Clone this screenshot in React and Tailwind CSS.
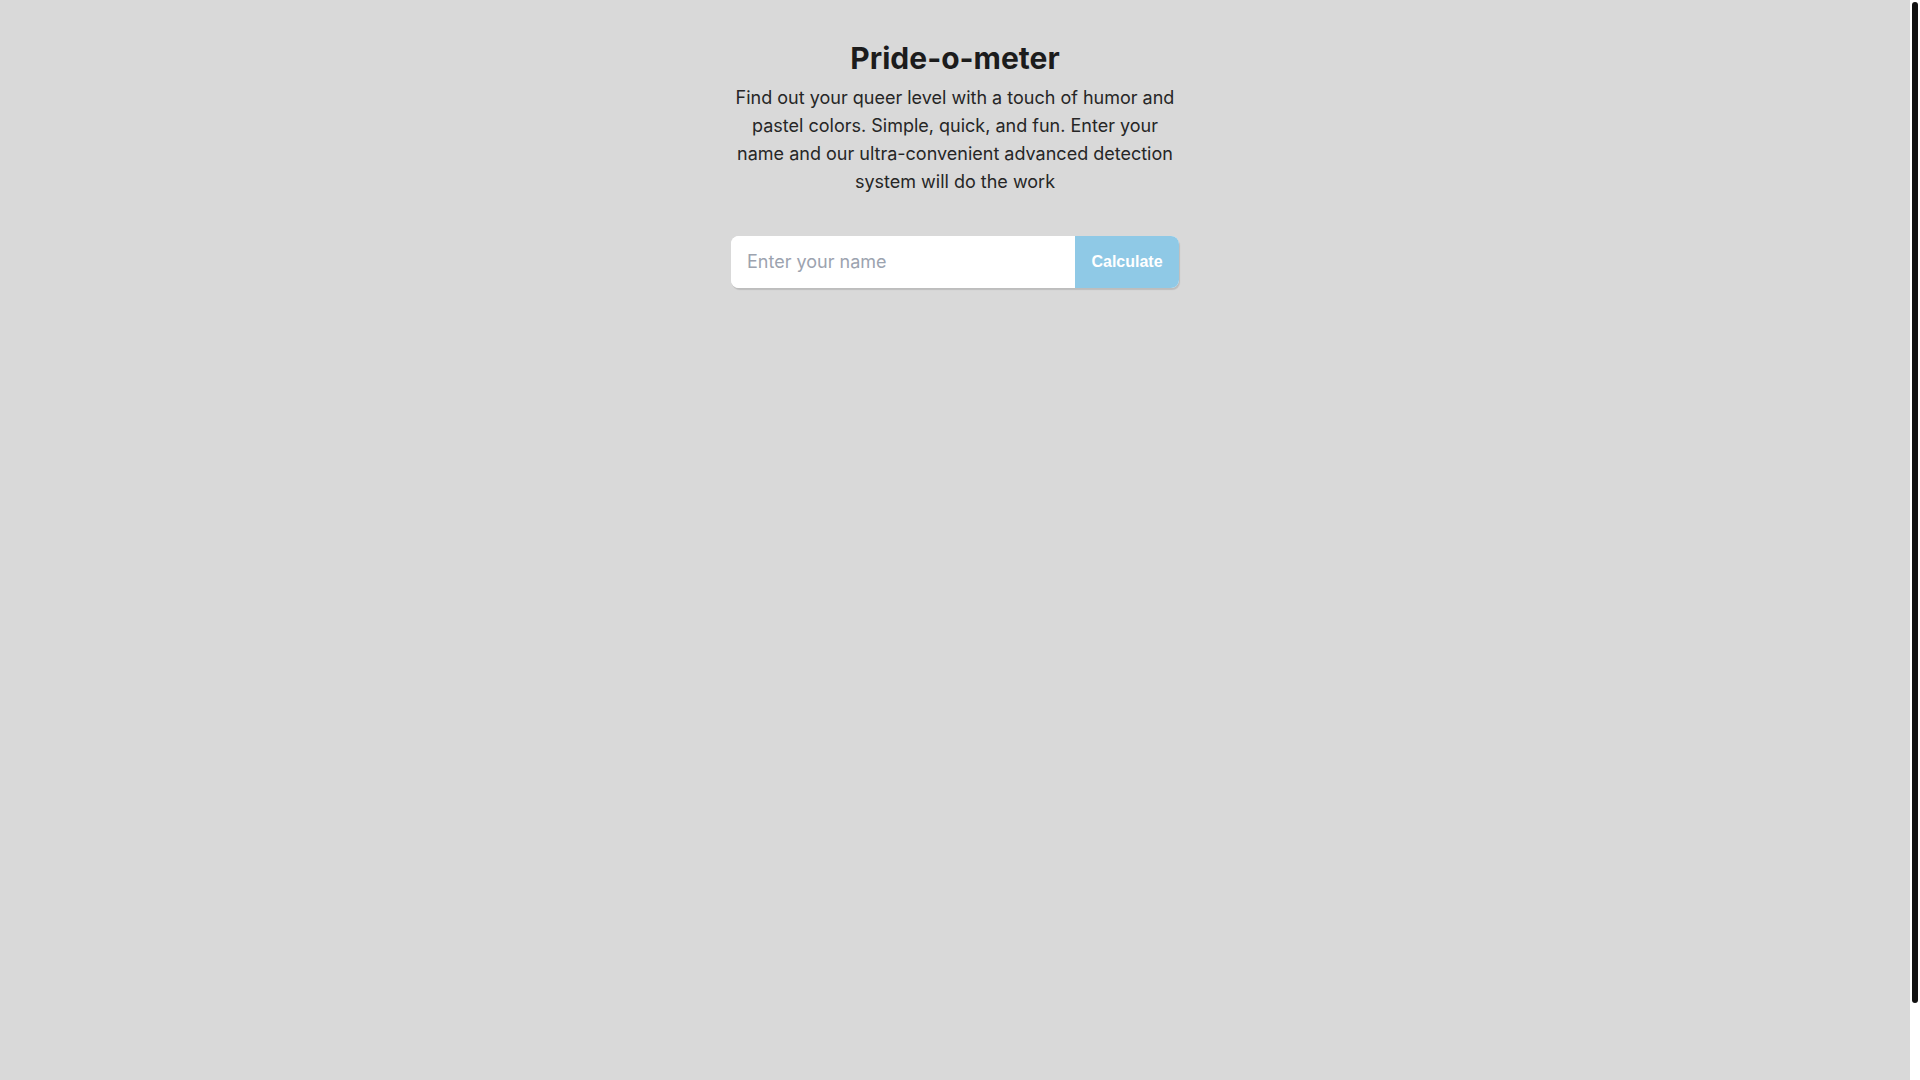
import React, { useState } from 'react'

const App = () => {
  const [name, setName] = useState("");

  return (
    <div className="h-screen flex overflow-hidden bg-white">
      <div className="flex-1 h-full bg-[#d9d9d9] flex flex-col items-center pt-10 font-['Inter',sans-serif]">
        <div className="w-[448px] flex flex-col items-center">
          <h1 className="text-3xl font-bold text-[#1c1c1c]">Pride-o-meter</h1>
          <p className="mt-2 text-lg text-center text-[#262626]">
            Find out your queer level with a touch of humor and pastel colors. Simple, quick, and fun. Enter your name and our ultra-convenient advanced detection system will do the work
          </p>

          <form onSubmit={(e) => e.preventDefault()} className="mt-10 w-full flex h-[52px] rounded-lg overflow-hidden bg-white shadow-[1px_2px_1px_rgba(0,0,0,0.13)]">
            <input
              value={name}
              onChange={(e) => setName(e.target.value)}
              className="flex-1 min-w-0 px-4 text-lg text-[#262626] bg-white outline-none placeholder:text-[#9ca3af]"
              type="text"
              placeholder="Enter your name"
            />
            <button className="w-[104px] bg-[#8fc9e6] text-white font-bold text-base font-['Liberation_Sans',Arial,sans-serif] cursor-pointer">
              Calculate
            </button>
          </form>
        </div>
      </div>

      {/* scrollbar rail */}
      <div className="w-[10px] h-full bg-white flex justify-center">
        <div className="mt-[2px] w-[6px] h-[1001px] rounded-full bg-[#111111]"></div>
      </div>
    </div>
  )
}

export default App
